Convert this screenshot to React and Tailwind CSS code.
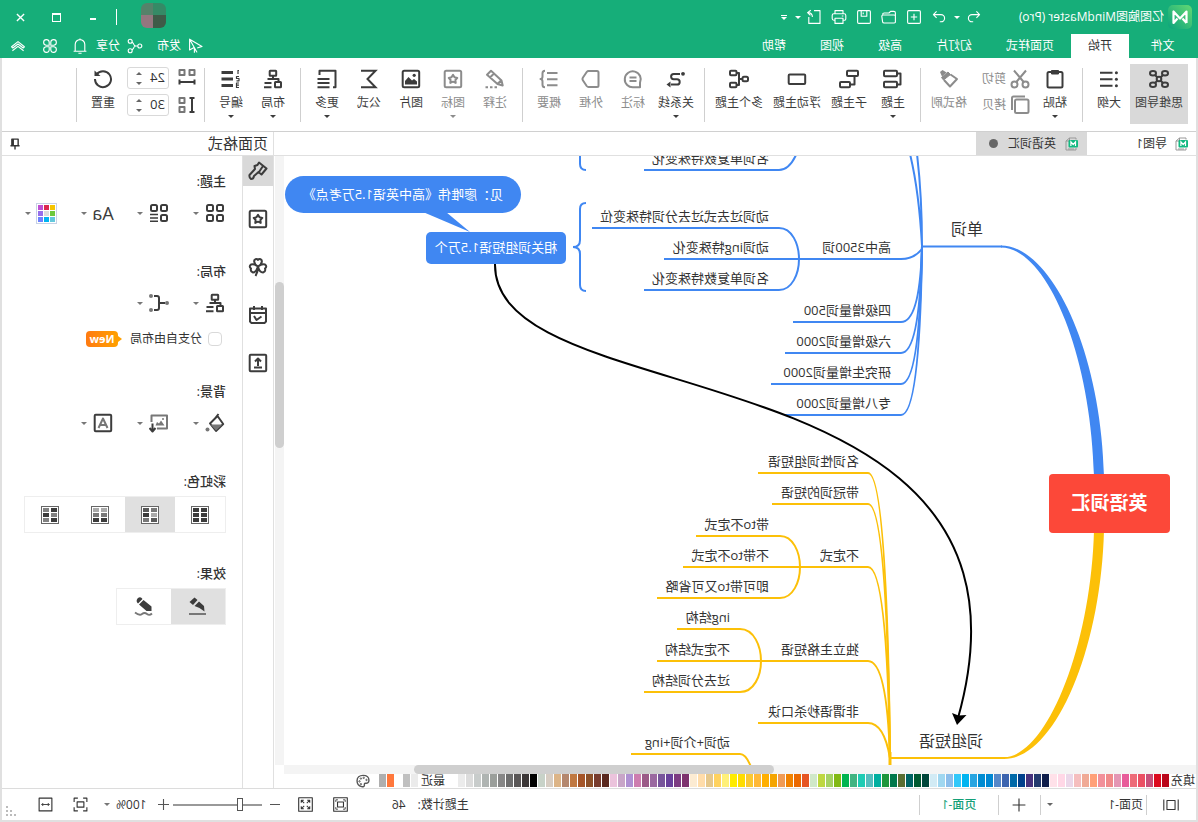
import { useState } from 'react'

const BLUE = '#4087f2'
const YELLOW = '#fcc008'

// stroked icon on a 20x20 grid
function Icon({ size = 20, sw = 2, children }) {
    return (
        <svg width={size} height={size} viewBox="0 0 20 20" fill="none" stroke="currentColor" strokeWidth={sw} strokeLinejoin="round" className="shrink-0" aria-hidden="true">
            {children}
        </svg>
    )
}

function Caret({ className = '' }) {
    return (
        <svg width="6" height="3" viewBox="0 0 6 3" fill="currentColor" className={`shrink-0 ${className}`} aria-hidden="true">
            <path d="M0 0h6L3 3z" />
        </svg>
    )
}

const star = 'M10 5.800l1.500 2.500 2.800.6-1.900 2.100.3 2.900-2.700-1.200-2.700 1.200.3-2.900-1.900-2.100 2.800-.6z'

const icons = {
    mind: <><circle cx="10" cy="10" r="2.300" /><ellipse cx="4" cy="4.300" rx="3" ry="2.300" /><ellipse cx="16" cy="4.300" rx="3" ry="2.300" /><ellipse cx="4" cy="15.700" rx="3" ry="2.300" /><ellipse cx="16" cy="15.700" rx="3" ry="2.300" /><path d="M6 6l2.500 2.500M14 6l-2.500 2.500M6 14l2.500-2.500M14 14l-2.500-2.500" /></>,
    outline: <><path d="M6.500 3.700H19M6.500 10.300H19M6.500 16.700H19" strokeWidth="2" /><g fill="currentColor" stroke="none"><circle cx="2.600" cy="3.700" r="1.500" /><circle cx="2.600" cy="10.300" r="1.500" /><circle cx="2.600" cy="16.700" r="1.500" /></g></>,
    paste: <><rect x="2.500" y="3" width="15" height="15.500" rx="1.500" /><path d="M6.500 1.500h7v3.500h-7z" fill="currentColor" strokeWidth="1" /></>,
    cut: <><circle cx="4.500" cy="15.500" r="3" /><circle cx="15.500" cy="15.500" r="3" /><path d="M6.300 13L16 1.500M13.700 13L4 1.500" /></>,
    copy: <><rect x="1.500" y="4.500" width="13.500" height="13.500" rx="1.500" /><path d="M5 1.500h11.500q1.500 0 1.500 1.500v12" /></>,
    brush: <><path d="M16.500 1l2.500 2-2 4.500-4.500-4z" fill="currentColor" stroke="none" /><path d="M11 3l6.500 5.500-2 2.500L8.500 5.500z" fill="currentColor" strokeWidth="1" /><path d="M8.500 5.500L2 10l7 7.500 6-6.500" /></>,
    topic: <><rect x="6" y="1.800" width="13" height="5.500" rx="1" /><rect x="6" y="12.800" width="13" height="5.500" rx="1" /><path d="M6 4.500H2.500v11H6" /></>,
    subtopic: <><rect x="1" y="1.800" width="11" height="5.200" rx="1" /><rect x="9" y="13" width="10" height="5.200" rx="1" /><path d="M4.500 7v8.600H9" /></>,
    floating: <rect x="1.800" y="5.500" width="16.500" height="9.500" rx="1" />,
    multi: <><rect x="1" y="7.800" width="5.500" height="4.500" rx="1.500" /><rect x="12.500" y="1.800" width="6.500" height="4.500" rx="1" /><rect x="12.500" y="13.800" width="6.500" height="4.500" rx="1" /><path d="M6.500 10H10M12.500 4H10v12h2.500" /></>,
    relation: <><path d="M6 5h6.300a2.600 2.600 0 0 1 0 5.200H9a2.700 2.700 0 0 0 0 5.400h6" strokeWidth="2" /><circle cx="3" cy="4.800" r="1.900" fill="currentColor" stroke="none" /><path d="M15.500 12.500l4 3-4 3z" fill="currentColor" stroke="none" /></>,
    callout: <><path d="M3 18.300v-4.500a8 8 0 1 1 6.500 4.500z" /><path d="M6.500 8.500h7M6.500 12h7" /></>,
    frame: <path d="M4 2h8.500q1 0 1.800 1L18 8.500q1 1.500 0 3L14.300 17q-.8 1-1.800 1H4q-1.500 0-1.500-1.500v-13Q2.500 2 4 2z" />,
    summary: <><path d="M1.500 4h10.500M1.500 10.300h10.500M1.500 16.300h10.500" /><path d="M14 1.800q2.500 0 2.500 2.500v3.200q0 2.500 2 2.500-2 0-2 2.500v3.200q0 2.500-2.500 2.500" /></>,
    note: <><path d="M14 1.800l4 4L7.500 15l-5.200 1.500L3.500 11.500zM11 4.500l4 4M4 11.500l3.500 3.500" /><path d="M8 18.300h2.500M12.500 18.300H15M17 18.300h2.500" /></>,
    mark: <><rect x="1.800" y="1.800" width="16.500" height="16.500" rx="1.500" /><path d={star} /></>,
    image: <><rect x="1.800" y="1.800" width="16.500" height="16.500" rx="1.500" /><circle cx="6.800" cy="6.300" r="1.600" fill="currentColor" stroke="none" /><path d="M4 15.500v-3L7 10l2 1.500L12.500 8l3.500 4v3.500z" fill="currentColor" stroke="none" /></>,
    formula: <path d="M18 1.800H3.500l8 8.200-8 8.200H18" strokeWidth="2" strokeLinejoin="miter" />,
    more: <path d="M17.500 6V1.800h-16v16.500H4M7.500 10h12M7.500 14h12M7.500 18.300h12" />,
    layout: <><rect x="6.800" y="1.800" width="6.500" height="5" rx=".5" /><path d="M10 7v3M4.500 13v-3h11" /><rect x="2" y="13" width="6" height="5.200" rx=".5" /><path d="M11.500 14h7M11.500 18.200h7.500" /></>,
    numbering: <><path d="M8 3.500h11.500M8 10h11.500M8 16.500h11.500" strokeWidth="2.800" /><path d="M3 1v4M2 1.500h1M2 7.500h2.500v2H2v2.300h2.500M2 14h2.500v4.500H2M2 16.200h2.500" strokeWidth="1.200" /></>,
    spaceH: <><g stroke="#777"><rect x="2.500" y="2" width="5" height="5" /><rect x="12.500" y="2" width="5" height="5" /></g><path d="M2.500 11.500v5M17.500 11.500v5M2.500 14h15" strokeWidth="2" /></>,
    spaceV: <><path d="M2.500 3h5M2.500 17h5M5 3v14" strokeWidth="2" /><g stroke="#777"><rect x="12.500" y="3" width="5" height="5" /><rect x="12.500" y="12" width="5" height="5" /></g></>,
    reset: <><path d="M16.500 5.500A8 8 0 1 0 18 10" strokeWidth="2" /><path d="M18.500 1.500v5.500H12.500z" fill="currentColor" stroke="none" /></>,
    undo: <path d="M7 3L3 7l4 4M3 7h9.500a4.500 4.500 0 0 1 0 9H11" />,
    redo: <path d="M13 3l4 4-4 4M17 7H7.500a4.500 4.500 0 0 0 0 9H9" />,
    plus: <><rect x="2" y="2" width="16" height="16" rx="1.500" /><path d="M10 6v8M6 10h8" /></>,
    open: <path d="M2 17V5q0-2 2-2h4l2 2h6q2 0 2 2M2 9q0-1.500 1.500-1.500h14Q19 7.500 19 9l-1 7q-.2 1.500-2 1.500H3.500Q2 17.500 2 16z" />,
    save: <><rect x="2" y="2" width="16" height="16" rx="1.500" /><path d="M6.500 2v7h7V2M11 4.500v2" /></>,
    print: <path d="M5 6V2h10v4M5 14H3.500Q1.500 14 1.500 12V8q0-2 2-2h13q2 0 2 2v4q0 2-2 2H15M5 11.500h10V18H5zM4.500 8.800h2" />,
    exportTo: <path d="M10 2H2.500v16h14V10M12 10q0-5 5-5.500M14 1.500l4 3-3.500 3.500" />,
    send: <path d="M18 1.500v13.500l-5.500-3L9 17.500zM12 12.500v6M18 1.500L2.500 10.500l6 2" />,
    share: <><circle cx="4" cy="10" r="2.500" /><circle cx="16" cy="4" r="2.500" /><circle cx="16" cy="16" r="2.500" /><path d="M6.500 10h2.500q2 0 3-3l1.500-2M9 10q2 0 3 3l1.500 2" /></>,
    bell: <path d="M2 16.500h16M4 16.500V8a6 6 0 0 1 12 0v8.500M10 .5v1.500M8 19h4" />,
    clover: <path d="M9 9H5a3.500 3.500 0 1 1 4-4zM11 9V5a3.500 3.500 0 1 1 4 4zM9 11v4a3.500 3.500 0 1 1-4-4zM11 11h4a3.500 3.500 0 1 1-4 4z" />,
    up: <path d="M2 11l8-6.500 8 6.500-1.500 1.500L10 7.500 3.500 12.500zM3 16l7-5.500 7 5.500" />,
    format: <path d="M1.500 7.500L9 1.500l1.500 2.500 3 1-.5 3 5.500 6q.5 2.500-1.500 4-2.500 0-3-3L9.500 11 6.500 13.500zM5 5l4 6" strokeWidth="2" />,
    shamrock: <path d="M10 9.500Q5 6 6.500 3 8.500 1 10 3q1.500-2 3.500 0 1.500 3-3.500 6.500Q14 6.500 17 7.500q2.500 2 0 4 1 3-2 4-3 0-5-6-1.500 6-5 6-3-1-2-4-2.500-2 0-4 3-1 7 2zM10 10q0 5 2.500 9" />,
    task: <><path d="M2 3.500h16v13L16.500 18h-13L2 16.500zM2 8h16M6 1v4M14 1v4" /><path d="M6.500 11.500l5 3.500 2.500-4" /></>,
    upload: <><rect x="1.800" y="1.800" width="16.500" height="16.500" rx="1" /><path d="M10 13V6.500M7 8.500L10 5.500l3 3M6 14.500h8" /></>,
    tiles: <><rect x="2" y="2" width="6" height="6" rx="1.500" /><rect x="12" y="2" width="6" height="6" rx="1.500" /><rect x="2" y="12" width="6" height="6" rx="1.500" /><rect x="12" y="12" width="6" height="6" rx="1.500" /></>,
    tilesList: <><rect x="2" y="2" width="6" height="6" rx="1.500" /><rect x="12" y="2" width="6" height="6" rx="1.500" /><rect x="2" y="12" width="6" height="6" rx="1.500" /><path d="M11 11.500h8M11 15h8M11 18.300h8" strokeWidth="1.600" /></>,
    bracket: <><path d="M4 10h5M15 3h-3q-2 0-2 2v10q0 2 2 2h3" /><g fill="#777" stroke="none"><circle cx="2" cy="10" r="2" /><circle cx="18" cy="3" r="2" /><circle cx="18" cy="17" r="2" /></g></>,
    bucket: <><path d="M7.500 3L15 10.500 9 18 1.800 11zM6.500 1l4 5" /><path d="M2.500 11.500h12L9 17.500z" fill="#777" stroke="none" /><circle cx="17.500" cy="16.500" r="2" fill="#777" stroke="none" /></>,
    bgImage: <><path d="M12 15.500H2v-13h15.500V9" stroke="#777" strokeWidth="2" /><path d="M4.500 12.500l3.500-5 2 3 2-1.500 1.500 3.500z" fill="#777" stroke="none" /><circle cx="6" cy="6" r="1" fill="#777" stroke="none" /><path d="M16.500 10.500V18M13.500 15l3 3.500 3-3.500" strokeWidth="2" /></>,
    watermark: <><rect x="1.800" y="1.800" width="16.500" height="16.500" rx="1" strokeWidth="2" /><path d="M5.500 15L10 5.500l4.500 9.500M7.500 12h5" stroke="#777" strokeWidth="2" /></>,
    nib: <><path d="M8.500 11L3.500 14.500 4 9l5-4.500 4.500 4.500z" fill="currentColor" stroke="none" /><path d="M10.500 3L13.500.5l5 4.500-3.500 3z" fill="currentColor" stroke="none" /><path d="M2 17h17" stroke="#777" strokeWidth="2" /></>,
    marker: <><path d="M2.500 13V9.500l8-6.500 4.500 4.500L7.500 14H2.500zM11.500 2Q13.500-1 16.500 1.500 18.500 4.500 16 6.500z" fill="currentColor" stroke="none" /><path d="M2 16.500q2.500 2.500 5 .5t5 0 7-1.500" stroke="#777" strokeWidth="1.800" /></>,
    pin: <path d="M5.500 3h9v9.500h-9zM3.500 12.500h13M10 12.500V18M12.500 3v9" />,
    pages: <path d="M5.500 5h9v10h-9zM2 4v12M18 4v12" />,
    fitPage: <><rect x="2" y="2" width="16" height="16" /><rect x="6.500" y="7" width="7" height="6" /><path d="M4.500 7V4.500H7M13 4.500h2.500V7M15.500 13v2.500H13M7 15.500H4.500V13" strokeWidth="1" /></>,
    fullscreen: <><rect x="2" y="2" width="16" height="16" /><path d="M5 8V5h3M12 5h3v3M15 12v3h-3M8 15H5v-3M5 5l3.500 3.500M15 5l-3.500 3.500M15 15l-3.500-3.500M5 15l3.500-3.500" strokeWidth="1.200" /></>,
    focus: <><path d="M1.500 6.500v-5h5M13.500 1.500h5v5M18.500 13.500v5h-5M6.500 18.500h-5v-5" /><rect x="5.500" y="6.500" width="9" height="7" /></>,
    fitWidth: <><rect x="1.500" y="1.500" width="17" height="17" /><path d="M5 10h10M7 8l-2 2 2 2M13 8l2 2-2 2" strokeWidth="1.200" /></>,
    palette: <><path d="M10 2C4 2 1.500 5.500 1.500 9c0 4 3 4.500 5 4 2 0 1.500 2 1.500 3 0 2 2 2.500 4 2 4-1 6.500-4 6.500-8.500C18.500 5 15 2 10 2z" /><g strokeWidth="1.400"><circle cx="5" cy="8.500" r="1" /><circle cx="9" cy="5.500" r="1" /><circle cx="13" cy="6.500" r="1" /><circle cx="15" cy="10.500" r="1" /><circle cx="13" cy="14.500" r="1" /></g></>,
}

function MLogo({ size }) {
    return (
        <svg width={size} height={size} viewBox="0 0 24 24" className="shrink-0" aria-hidden="true">
            <defs>
                <linearGradient id="logo" x1="0" y1="0" x2="1" y2="1">
                    <stop offset="0" stopColor="#63d873" />
                    <stop offset="1" stopColor="#0aa37c" />
                </linearGradient>
            </defs>
            <rect width="24" height="24" rx="5" fill="url(#logo)" />
            <path d="M5.500 18V6.500l6.500 7 6.500-7V18l-4-4.500M5.500 18l4-4.500" fill="none" stroke="#fff" strokeWidth="2.200" strokeLinejoin="round" />
        </svg>
    )
}

function DocIcon() {
    return (
        <svg width="14" height="14" viewBox="0 0 14 14" className="shrink-0" aria-hidden="true">
            <path d="M3 2.500V1h6.500L13 4v9H3v-2M9.500 1v3H13M5 12h6" fill="none" stroke="#999" />
            <rect x="1" y="3" width="9.500" height="7.500" rx="1" fill="#12b981" />
            <path d="M3.500 9V4.800l2.300 2.700 2.300-2.700V9" fill="none" stroke="#fff" strokeWidth="1.200" />
        </svg>
    )
}

function TitleBar() {
    return (
        <div className="flex h-[34px] items-center pl-1.5 pr-[3px]">
            <MLogo size={24} />
            <span className="ml-1 w-[177px] whitespace-nowrap text-xs">亿图脑图MindMaster (Pro)</span>
            <button aria-label="撤销" className="flex w-[25px] justify-center"><Icon size={16} sw={1.4}>{icons.undo}</Icon></button>
            <button aria-label="撤销历史" className="flex w-2.5 justify-center"><Caret /></button>
            {[['重做', 'redo'], ['新建', 'plus'], ['打开', 'open'], ['保存', 'save'], ['打印', 'print'], ['导出', 'exportTo']].map(([label, name]) => (
                <button key={name} aria-label={label} className="flex w-[25px] justify-center">
                    <Icon size={16} sw={1.4}>{icons[name]}</Icon>
                </button>
            ))}
            <button aria-label="导出选项" className="flex w-2 justify-center"><Caret /></button>
            <button aria-label="自定义" className="flex w-5 flex-col items-center gap-px">
                <span className="h-px w-1.5 bg-white" />
                <Caret />
            </button>

            {/* Avatar */}
            <div className="mb-1 ml-auto mr-6 grid size-[25px] grid-cols-2 overflow-hidden rounded-md">
                <span className="bg-[#358a66]" />
                <span className="bg-[#55826a]" />
                <span className="bg-[#3e5b48]" />
                <span className="bg-[#94767f]" />
            </div>
            <span className="mr-[5px] h-4 w-px bg-white" />
            <button aria-label="最小化" className="flex w-9 justify-center pt-1"><span className="h-0.5 w-1.5 bg-white" /></button>
            <button aria-label="最大化" className="flex w-9 justify-center"><span className="size-[9px] border border-t-2 border-white" /></button>
            <button aria-label="关闭" className="flex w-9 justify-center"><Icon size={9} sw={3}><path d="M2 2l16 16M18 2L2 18" /></Icon></button>
        </div>
    )
}

function MenuBar() {
    return (
        <div className="flex h-6 items-stretch pl-0.5 pr-2.5 text-xs">
            <button className="w-[67px]">文件</button>
            <button className="bg-white px-[17px] text-[#333]">开始</button>
            {['页面样式', '幻灯片', '高级', '视图', '帮助'].map(t => (
                <button key={t} className="px-[17px]">{t}</button>
            ))}
            <button className="ml-auto flex items-center gap-[7px]"><Icon size={16} sw={1.4}>{icons.send}</Icon>发布</button>
            <button className="ml-3.5 flex items-center gap-[7px]"><Icon size={16} sw={1.4}>{icons.share}</Icon>分享</button>
            <button aria-label="通知" className="ml-2"><Icon size={16} sw={1.4}>{icons.bell}</Icon></button>
            <button aria-label="应用" className="ml-3.5"><Icon size={16} sw={1.4}>{icons.clover}</Icon></button>
            <button aria-label="收起" className="ml-4"><Icon size={16} sw={1.4}>{icons.up}</Icon></button>
        </div>
    )
}

function Tool({ icon, label, width = 'w-[42px]', caret, active, disabled }) {
    return (
        <button disabled={disabled} className={`flex h-[60px] shrink-0 flex-col items-center pt-[5px] ${width} ${active ? 'bg-[#d9d9d9]' : ''} ${disabled ? 'text-[#8c8c8c]' : 'text-[#3c3c3c]'}`}>
            <Icon>{icons[icon]}</Icon>
            <span className="mt-1.5 whitespace-nowrap leading-4">{label}</span>
            {caret && <Caret className="mt-1" />}
        </button>
    )
}

function Divider() {
    return <span className="ml-[5px] mr-1.5 mt-1 h-[54px] w-px shrink-0 bg-[#cfcfcf]" />
}

function Spinner({ icon, label, value }) {
    return (
        <label className="flex items-center gap-2">
            <Icon>{icons[icon]}</Icon>
            <span className="flex h-[22px] w-[42px] items-center rounded-[3px] border border-[#d9d9d9]">
                <input aria-label={label} defaultValue={value} className="w-[26px] bg-transparent pl-[3px] text-[13px] text-[#333] outline-none" />
                <span className="flex flex-col gap-[7px] text-[#666]">
                    <Caret className="rotate-180" />
                    <Caret />
                </span>
            </span>
        </label>
    )
}

function Ribbon() {
    return (
        <div className="flex h-[74px] items-start border-b border-[#d0d0d0] pl-2 pt-1.5 text-xs">
            <Tool icon="mind" label="思维导图" width="w-[58px]" active />
            <Tool icon="outline" label="大纲" />
            <Divider />
            <Tool icon="paste" label="粘贴" caret />
            <div className="flex h-[60px] w-[62px] shrink-0 flex-col gap-1.5 pl-1 pt-[5px] text-[#8c8c8c]">
                <button className="flex items-center gap-1"><Icon>{icons.cut}</Icon>剪切</button>
                <button className="flex items-center gap-1"><Icon>{icons.copy}</Icon>拷贝</button>
            </div>
            <Tool icon="brush" label="格式刷" width="w-[46px]" disabled />
            <Divider />
            <Tool icon="topic" label="主题" caret />
            <Tool icon="subtopic" label="子主题" width="w-[46px]" />
            <Tool icon="floating" label="浮动主题" width="w-[58px]" />
            <Tool icon="multi" label="多个主题" width="w-[58px]" />
            <Divider />
            <Tool icon="relation" label="关系线" width="w-11" caret />
            <Tool icon="callout" label="标注" disabled />
            <Tool icon="frame" label="外框" disabled />
            <Tool icon="summary" label="概要" disabled />
            <Divider />
            <Tool icon="note" label="注释" disabled />
            <Tool icon="mark" label="图标" caret disabled />
            <Tool icon="image" label="图片" />
            <Tool icon="formula" label="公式" />
            <Tool icon="more" label="更多" caret />
            <Divider />
            <Tool icon="layout" label="布局" caret />
            <Tool icon="numbering" label="编号" caret />
            <Divider />
            <div className="flex shrink-0 flex-col gap-[5px] pl-px pr-[3px] pt-[3px] text-[#3c3c3c]">
                <Spinner icon="spaceH" label="水平间距" value="24" />
                <Spinner icon="spaceV" label="垂直间距" value="30" />
            </div>
            <Tool icon="reset" label="重置" />
            <Divider />
        </div>
    )
}

function DocTabs() {
    return (
        <div className="flex h-6 shrink-0 border-b border-[#e0e0e0] text-xs text-[#333]">
            <button className="flex w-[109px] items-center gap-2 pl-[7px]"><DocIcon />导图1</button>
            <button className="flex w-[111px] items-center bg-[#d9d9d9] pl-2">
                <DocIcon />
                <span className="ml-[9px]">英语词汇</span>
                <span className="ml-2.5 size-[9px] rounded-full bg-[#666]" />
            </button>
        </div>
    )
}

// x: text start, y: underline of the topic
const topics = [
    { text: '单词', x: 213, y: 90, big: true },
    { text: '高中3500词', x: 305, y: 103 },
    { text: '四级增量词500', x: 305, y: 166 },
    { text: '六级增量词2000', x: 305, y: 197 },
    { text: '研究生增量词2000', x: 305, y: 228 },
    { text: '专八增量词2000', x: 305, y: 259 },
    { text: '名词单复数特殊变化', x: 427, y: 14 },
    { text: '动词过去式过去分词特殊变位', x: 427, y: 72 },
    { text: '动词ing特殊变化', x: 427, y: 103 },
    { text: '名词单复数特殊变化', x: 427, y: 134 },
    { text: '词组短语', x: 213, y: 602, big: true },
    { text: '名词性词组短语', x: 337, y: 317 },
    { text: '带冠词的短语', x: 337, y: 348 },
    { text: '不定式', x: 337, y: 411 },
    { text: '独立主格短语', x: 337, y: 505 },
    { text: '非谓语秒杀口诀', x: 337, y: 567 },
    { text: '带to不定式', x: 427, y: 380 },
    { text: '不带to不定式', x: 427, y: 411 },
    { text: '即可带to又可省略', x: 427, y: 442 },
    { text: 'ing结构', x: 466, y: 473 },
    { text: '不定式结构', x: 466, y: 505 },
    { text: '过去分词结构', x: 466, y: 536 },
    { text: '动词+介词+ing', x: 466, y: 598 },
]

const blueBranches = [[166, 403], [197, 411], [228, 425], [259, 411]]
const yellowBranches = [[317, 438], [348, 424], [411, 396], [505, 435]]

function MindMap() {
    return (
        <div className="relative min-w-0 flex-1 overflow-hidden bg-white">
            <svg width="912" height="609" viewBox="0 0 912 609" fill="none" strokeWidth="2" className="absolute left-0 top-0">
                <path d="M195 89.500C146 89.500 95 192 92 320H102C105 196 150 91.500 195 91.500z" fill={BLUE} />
                <path d="M192 601C150 601 105 492 102 374H92C95 496 142 603 192 603z" fill={YELLOW} />

                <g stroke={BLUE}>
                    <path d="M194 90.500H274" />
                    <path d="M274 90Q274 40 279 -2M274 90Q277 35 286 -2" />
                    <path d="M274 93Q282 103 295 103H532" />
                    {blueBranches.map(([y, end]) => <path key={y} d={`M274 90Q276 ${y} 295 ${y}H${end}`} />)}
                    <path d="M604 72H417C404 72 397 88 397 103S404 134 417 134H552" />
                    <path d="M552 14H417Q407 14 400 -1" />
                    <path d="M610 47Q616 47 616 53V84Q616 91 623 91Q616 91 616 98V129Q616 135 610 135" />
                    <path d="M610 14Q616 14 616 8V-2" />
                </g>

                <g stroke={YELLOW}>
                    <path d="M191 602H306" />
                    <path d="M306 609V596" strokeWidth="3" />
                    {yellowBranches.map(([y, end]) => <path key={y} d={`M306 602Q309 ${y} 328 ${y}H${end}`} />)}
                    <path d="M306 602Q312 567 328 567H438" />
                    <path d="M500 380H416C403 380 396 396 396 411S403 442 416 442H539M396 411H513" />
                    <path d="M519 473H456C442 473 435 490 435 505S442 536 456 536H552M435 505H539" />
                    <path d="M565 598H456Q450 598 445 611" />
                </g>

                <path d="M701 108C703 264 132 184 238 562" stroke="#000" />
                <path d="M239 569l5-12-6.500 2.500-8-.5z" fill="#000" />
                <path d="M773 56H750L726 76z" fill={BLUE} />
            </svg>

            {topics.map(t => (
                <span
                    key={`${t.text}${t.y}`}
                    className={`absolute whitespace-nowrap leading-5 text-[#333] ${t.big ? 'text-base' : 'text-[13px]'}`}
                    style={{ left: t.x, top: t.y - (t.big ? 27 : 22) }}
                >
                    {t.text}
                </span>
            ))}

            <div className="absolute left-[26px] top-[318px] flex h-[59px] w-[121px] items-center justify-center rounded bg-[#fc4839] text-[19px] font-bold text-white">
                英语词汇
            </div>
            <div className="absolute left-[630px] top-[76px] flex h-8 w-[140px] items-center justify-center rounded-[5px] bg-[#4087f2] text-[13px] text-white">
                相关词组短语1.5万个
            </div>
            <div className="absolute left-[675px] top-5 flex h-[37px] w-[236px] items-center whitespace-nowrap rounded-full bg-[#4087f2] pl-[18px] text-[13px] text-white">
                见：廖唯伟《高中英语1.5万考点》
            </div>
        </div>
    )
}

const swatches = [
    '#b90519', '#dc0a1e', '#c8507a', '#eb5064', '#ed6b78', '#e85c9a', '#e496b4', '#f08a8a', '#f2909a', '#ffa078', '#f0aa96', '#f5bebe', '#ebd7e9', '#ffd7e6', '#ffe1e9',
    '#0f1e4b', '#233a6e', '#46327d', '#00408c', '#0069a8', '#3c64af', '#5587c8', '#0087d2', '#008cd2', '#28a5e1', '#00b4f0', '#32c8fa', '#8cbeeb', '#a0d7f0', '#d2ebf5',
    '#00463a', '#005a32', '#006464', '#5a6e32', '#00784b', '#1e963c', '#00afa0', '#55bebe', '#1eccb4', '#41b482', '#00b450', '#82b914', '#a5d264', '#bed741', '#d0e8c9',
    '#e65523', '#eb6900', '#f08200', '#f09b55', '#f5a500', '#ffaf00', '#ffb937', '#fac832', '#ffdc00', '#ffeb00', '#fff078', '#ffd25f', '#e6c88c', '#ffdcaa', '#fcebd2',
    '#7d326e', '#7d3c82', '#69419b', '#78559b', '#9b69a0', '#9b5a87', '#cd7daf', '#af91d2', '#c8a5c8', '#ebc3dc',
    '#5a281e', '#783c2d', '#8c5028', '#a55528', '#c07841', '#b4876e', '#dcb487', '#d7cdc3', '#c8d2c8',
    '#000000', '#3c3737', '#5a5757', '#6e6e6e', '#878787', '#9b9f9b', '#afb4b2', '#c8cccb', '#dcdcdc', '#ebebeb',
]
const recent = ['#ebebeb', '#c0c0c0', '#ffffff', '#ff783c', '#afafaf']

function Swatches({ colors }) {
    return (
        <div className="flex gap-px">
            {colors.map(c => (
                <button key={c} aria-label={c} className="h-[13px] w-[7px] shrink-0" style={{ backgroundColor: c }} />
            ))}
        </div>
    )
}

function ColorBar() {
    return (
        <div className="flex h-3.5 shrink-0 items-start text-xs leading-[14px] text-[#333]">
            <span className="w-[27px] shrink-0 pl-px">填充</span>
            <Swatches colors={swatches} />
            <span className="mx-[3px] shrink-0 pl-2.5">最近</span>
            <Swatches colors={recent} />
            <button aria-label="更多颜色" className="ml-[9px] text-[#555]"><Icon size={14}>{icons.palette}</Icon></button>
        </div>
    )
}

function PanelTool({ label, children }) {
    return (
        <button aria-label={label} className="flex h-6 w-14 shrink-0 items-center gap-[5px] text-[#3c3c3c]">
            <span className="flex w-[22px] justify-center">{children}</span>
            <Caret className="text-[#777]" />
        </button>
    )
}

const paletteColors = ['#f5c400', '#dc2850', '#be50d2', '#6ec83c', '#dcdcdc', '#966eeb', '#64c8dc', '#00b4f0', '#6e82ff']

const rainbowShades = [
    ['#3c3c3c', '#3c3c3c', '#3c3c3c', '#3c3c3c', '#3c3c3c', '#3c3c3c'],
    ['#787878', '#5a5a5a', '#aaaaaa', '#3c3c3c', '#5a5a5a', '#787878'],
    ['#aaaaaa', '#aaaaaa', '#787878', '#787878', '#3c3c3c', '#3c3c3c'],
    ['#3c3c3c', '#828282', '#828282', '#3c3c3c', '#3c3c3c', '#828282'],
]

function SideTabs() {
    return (
        <div className="flex w-[31px] shrink-0 flex-col gap-[18px] border-r border-[#e0e0e0] text-[#3c3c3c]">
            {['format', 'mark', 'shamrock', 'task', 'upload'].map((name, i) => (
                <button key={name} aria-label={name} className={`flex h-[30px] items-center justify-center ${i === 0 ? 'bg-[#d9d9d9]' : ''}`}>
                    <Icon>{icons[name]}</Icon>
                </button>
            ))}
        </div>
    )
}

function FormatPanel() {
    const [rainbow, setRainbow] = useState(1)
    const [effect, setEffect] = useState(0)

    return (
        <aside className="flex w-[272px] shrink-0 flex-col border-l border-[#e0e0e0]">
            <div className="flex h-6 shrink-0 items-center justify-between border-b border-[#e0e0e0] pl-[5px] pr-1.5 text-[15px] text-[#333]">
                <h2>页面格式</h2>
                <button aria-label="固定"><Icon size={14}>{icons.pin}</Icon></button>
            </div>
            <div className="flex min-h-0 flex-1">
                <SideTabs />
                <div className="min-w-0 flex-1 px-4 pt-[15px] text-[13px] leading-5 text-[#333]">
                    <h3 className="font-medium">主题:</h3>
                    <div className="mt-2.5 flex">
                        <PanelTool label="主题样式"><Icon>{icons.tiles}</Icon></PanelTool>
                        <PanelTool label="主题列表"><Icon>{icons.tilesList}</Icon></PanelTool>
                        <PanelTool label="主题字体"><span className="text-lg leading-6">Aa</span></PanelTool>
                        <PanelTool label="主题颜色">
                            <span className="grid size-[21px] shrink-0 grid-cols-3 gap-px border border-[#c8d2e6] p-px">
                                {paletteColors.map(c => <span key={c} style={{ backgroundColor: c }} />)}
                            </span>
                        </PanelTool>
                    </div>

                    <h3 className="mt-9 font-medium">布局:</h3>
                    <div className="mt-2.5 flex">
                        <PanelTool label="布局样式"><Icon>{icons.layout}</Icon></PanelTool>
                        <PanelTool label="连线样式"><Icon>{icons.bracket}</Icon></PanelTool>
                    </div>
                    <div className="mt-3.5 flex h-5 items-center pl-1">
                        <label className="flex items-center gap-1.5 text-xs">
                            <input type="checkbox" className="size-3.5 appearance-none rounded-sm border border-[#d9d9d9] bg-white" />
                            分支自由布局
                        </label>
                        <span className="ml-2 flex items-center">
                            <span className="h-0 w-0 border-y-[3px] border-r-[4px] border-y-transparent border-r-[#ffa000]" />
                            <span className="flex h-4 w-8 items-center justify-center rounded-sm bg-gradient-to-r from-[#ffa000] to-[#ff7a10] text-[11px] font-bold text-white">New</span>
                        </span>
                    </div>

                    <h3 className="mt-8 font-medium">背景:</h3>
                    <div className="mt-2.5 flex">
                        <PanelTool label="背景颜色"><Icon>{icons.bucket}</Icon></PanelTool>
                        <PanelTool label="背景图片"><Icon>{icons.bgImage}</Icon></PanelTool>
                        <PanelTool label="水印"><Icon>{icons.watermark}</Icon></PanelTool>
                    </div>

                    <h3 className="mt-9 font-medium">彩虹色:</h3>
                    <div className="mt-[5px] flex h-[37px] w-fit border border-[#eeeeee]">
                        {rainbowShades.map((shades, i) => (
                            <button key={i} aria-label={`彩虹色${i + 1}`} onClick={() => setRainbow(i)} className={`flex w-[50px] items-center justify-center ${rainbow === i ? 'bg-[#e0e0e0]' : ''}`}>
                                <span className="grid h-[18px] w-[18px] grid-cols-2 gap-x-0.5 gap-y-px border border-[#666] bg-white p-px">
                                    {shades.map((s, j) => <span key={j} style={{ backgroundColor: s }} />)}
                                </span>
                            </button>
                        ))}
                    </div>

                    <h3 className="mt-[30px] font-medium">效果:</h3>
                    <div className="mt-[5px] flex h-[37px] w-fit border border-[#eeeeee] text-[#3c3c3c]">
                        {['nib', 'marker'].map((name, i) => (
                            <button key={name} aria-label={name} onClick={() => setEffect(i)} className={`flex w-[54px] items-center justify-center ${effect === i ? 'bg-[#e0e0e0]' : ''}`}>
                                <Icon>{icons[name]}</Icon>
                            </button>
                        ))}
                    </div>
                </div>
            </div>
        </aside>
    )
}

function StatusBar() {
    return (
        <footer className="flex h-8 shrink-0 items-center border-t border-[#dcdcdc] text-xs text-[#333]">
            <button aria-label="页面列表" className="flex w-[49px] justify-center"><Icon size={18} sw={1.2}>{icons.pages}</Icon></button>
            <span className="h-5 w-px bg-[#cfcfcf]" />
            <div className="relative flex w-[105px] items-center">
                <select aria-label="页面" className="w-full appearance-none bg-transparent pl-[3px] outline-none">
                    <option>页面-1</option>
                </select>
                <Caret className="pointer-events-none absolute right-1.5 text-[#666]" />
            </div>
            <span className="h-5 w-px bg-[#cfcfcf]" />
            <button aria-label="添加页面" className="flex w-[41px] justify-center"><Icon size={16} sw={1.4}><path d="M10 2v16M2 10h16" /></Icon></button>
            <span className="h-5 w-px bg-[#cfcfcf]" />
            <button className="w-[78px] font-medium text-[#14a078]">页面-1</button>
            <span className="h-5 w-px bg-[#cfcfcf]" />

            <div className="ml-auto flex items-center pr-[26px]">
                <span>主题计数:</span>
                <span className="ml-3 w-12">46</span>
                <button aria-label="适合页面" className="flex w-[35px] justify-center"><Icon size={17} sw={1.3}>{icons.fitPage}</Icon></button>
                <button aria-label="全屏" className="flex w-[35px] justify-center"><Icon size={17} sw={1.3}>{icons.fullscreen}</Icon></button>
                <button aria-label="缩小" className="ml-2 h-px w-2.5 bg-[#555]" />
                <input
                    type="range"
                    aria-label="缩放"
                    defaultValue="22"
                    className="ml-2 h-0.5 w-[89px] appearance-none bg-[#999] [&::-webkit-slider-thumb]:h-[13px] [&::-webkit-slider-thumb]:w-1.5 [&::-webkit-slider-thumb]:appearance-none [&::-webkit-slider-thumb]:border [&::-webkit-slider-thumb]:border-[#555] [&::-webkit-slider-thumb]:bg-white"
                />
                <button aria-label="放大" className="ml-1 text-[#555]"><Icon size={11}><path d="M10 0v20M0 10h20" /></Icon></button>
                <button className="ml-[11px] flex items-center gap-1.5">100%<Caret className="text-[#777]" /></button>
                <button aria-label="聚焦" className="ml-1.5 flex w-[35px] justify-center"><Icon size={15} sw={1.5}>{icons.focus}</Icon></button>
                <button aria-label="适合宽度" className="flex w-[35px] justify-center"><Icon size={15} sw={1.5}>{icons.fitWidth}</Icon></button>
            </div>
            <svg width="12" height="12" viewBox="0 0 12 12" fill="#bbb" className="absolute bottom-1 right-1" aria-hidden="true">
                <path d="M8 0h2v2H8zM4 4h2v2H4zM8 4h2v2H8zM0 8h2v2H0zM4 8h2v2H4zM8 8h2v2H8z" />
            </svg>
        </footer>
    )
}

export default function App() {
    return (
        <div className="flex h-screen min-h-[600px] -scale-x-100 flex-col overflow-hidden bg-white [font-family:'Open_Sans','Noto_Sans_CJK_SC',sans-serif]">
            <header className="shrink-0 bg-[#16ae79] text-white">
                <TitleBar />
                <MenuBar />
            </header>
            <div className="flex min-h-0 flex-1 flex-col border-x-2 border-b-2 border-[#e0e0e0]">
                <Ribbon />
                <div className="flex min-h-0 flex-1">
                    <main className="flex min-w-0 flex-1 flex-col">
                        <DocTabs />
                        <div className="flex min-h-0 flex-1">
                            <MindMap />
                            <div className="mr-px w-[9px] bg-[#f4f4f4] pt-[126px]">
                                <div className="h-[166px] rounded-full bg-[#cfcfcf]" />
                            </div>
                        </div>
                        <div className="mr-2.5 h-[9px] shrink-0 bg-[#f4f4f4] pl-[422px]">
                            <div className="h-full w-[360px] rounded-full bg-[#cfcfcf]" />
                        </div>
                        <ColorBar />
                    </main>
                    <FormatPanel />
                </div>
                <StatusBar />
            </div>
        </div>
    )
}
